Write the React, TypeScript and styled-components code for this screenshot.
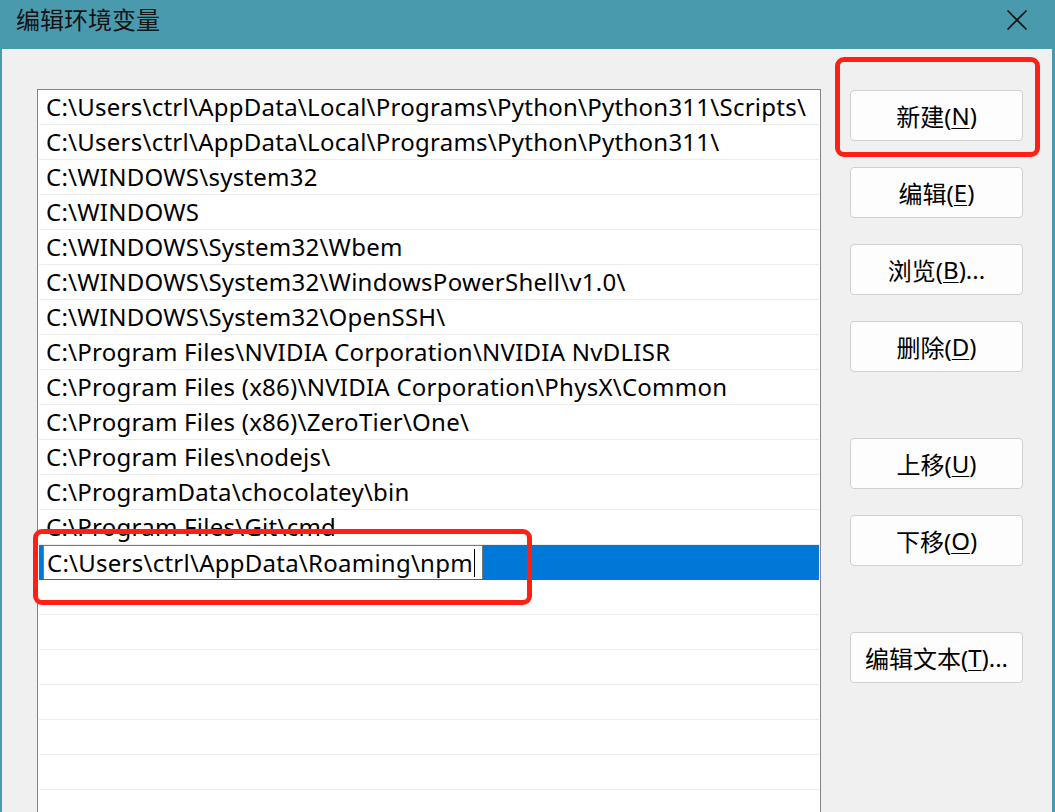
import styled, { createGlobalStyle } from 'styled-components'

const GlobalStyle = createGlobalStyle`
  html, body {
    margin: 0;
    padding: 0;
    overflow: hidden;
    background: #4a9aad;
  }
  * {
    box-sizing: border-box;
  }
`

const paths = [
  'C:\\Users\\ctrl\\AppData\\Local\\Programs\\Python\\Python311\\Scripts\\',
  'C:\\Users\\ctrl\\AppData\\Local\\Programs\\Python\\Python311\\',
  'C:\\WINDOWS\\system32',
  'C:\\WINDOWS',
  'C:\\WINDOWS\\System32\\Wbem',
  'C:\\WINDOWS\\System32\\WindowsPowerShell\\v1.0\\',
  'C:\\WINDOWS\\System32\\OpenSSH\\',
  'C:\\Program Files\\NVIDIA Corporation\\NVIDIA NvDLISR',
  'C:\\Program Files (x86)\\NVIDIA Corporation\\PhysX\\Common',
  'C:\\Program Files (x86)\\ZeroTier\\One\\',
  'C:\\Program Files\\nodejs\\',
  'C:\\ProgramData\\chocolatey\\bin',
  'C:\\Program Files\\Git\\cmd',
]

const editingValue = 'C:\\Users\\ctrl\\AppData\\Roaming\\npm'

const buttons = [
  { label: '新建', key: 'N', spaced: false },
  { label: '编辑', key: 'E', spaced: false },
  { label: '浏览', key: 'B', suffix: '...', spaced: false },
  { label: '删除', key: 'D', spaced: false },
  { label: '上移', key: 'U', spaced: true },
  { label: '下移', key: 'O', spaced: false },
  { label: '编辑文本', key: 'T', suffix: '...', spaced: true },
]

export default function App() {
  return (
    <>
      <GlobalStyle />
      <Window>
        <TitleBar>
          <Title>编辑环境变量</Title>
          <CloseButton aria-label='关闭'>
            <svg width='22' height='22' viewBox='0 0 22 22'>
              <path d='M1.5 1.5 L20.5 20.5 M20.5 1.5 L1.5 20.5' stroke='#111' strokeWidth='1.6' fill='none' />
            </svg>
          </CloseButton>
        </TitleBar>

        <Client>
          <PathList>
            {paths.map((p) => (
              <Row key={p}>{p}</Row>
            ))}
            <Row selected>
              <EditBox>
                {editingValue}
                <Caret />
              </EditBox>
            </Row>
            {Array.from({ length: 8 }).map((_, i) => (
              <Row key={`empty-${i}`} />
            ))}
          </PathList>

          <ButtonColumn>
            {buttons.map((b) => (
              <DialogButton key={b.key} spaced={b.spaced}>
                {b.label}(<u>{b.key}</u>){b.suffix}
              </DialogButton>
            ))}
          </ButtonColumn>
        </Client>

        <Highlight style={{ left: 835, top: 57, width: 205, height: 100 }} />
        <Highlight style={{ left: 33, top: 529, width: 499, height: 76 }} />
      </Window>
    </>
  )
}

const Window = styled.div`
  position: relative;
  width: 1055px;
  height: 812px;
  display: flex;
  flex-direction: column;
  background: #4a9aad;
  padding: 0 3px 0 2px;
  overflow: hidden;
  font-family: 'Noto Sans', 'Noto Sans CJK SC', sans-serif;
  color: #000;
`

const TitleBar = styled.div`
  height: 49px;
  flex-shrink: 0;
  display: flex;
  align-items: flex-start;
  justify-content: space-between;
`

const Title = styled.div`
  padding: 5px 0 0 14px;
  font-size: 24px;
  line-height: 30px;
  color: #141414;
`

const CloseButton = styled.div`
  padding: 9px 24px 0 0;
  line-height: 0;
`

const Client = styled.div`
  flex: 1;
  display: flex;
  align-items: flex-start;
  background: #f0f0f0;
  padding: 40px 0 0 35px;
`

const PathList = styled.div`
  width: 784px;
  flex-shrink: 0;
  background: #fff;
  border: 1px solid #838389;
  padding: 0 1px;
`

const Row = styled.div<{ selected?: boolean }>`
  height: 35px;
  border-bottom: 1px solid ${(p) => (p.selected ? '#0078d7' : '#ececec')};
  background: ${(p) => (p.selected ? '#0078d7' : 'transparent')};
  padding: ${(p) => (p.selected ? '0 0 0 4px' : '0 0 0 7px')};
  font-size: 24px;
  letter-spacing: 0.25px;
  line-height: 34px;
  white-space: nowrap;
  overflow: hidden;
`

const EditBox = styled.div`
  width: 440px;
  height: 35px;
  background: #fff;
  border: 1px solid #7a7a7a;
  padding-left: 3px;
  line-height: 32px;
  display: flex;
  align-items: center;
`

const Caret = styled.span`
  display: inline-block;
  width: 1px;
  height: 28px;
  background: #000;
  margin-left: 1px;
`

const ButtonColumn = styled.div`
  display: flex;
  flex-direction: column;
  margin-left: 29px;
  padding-top: 1px;
`

const DialogButton = styled.div<{ spaced?: boolean }>`
  width: 173px;
  height: 51px;
  margin-top: ${(p) => (p.spaced ? '66px' : '26px')};
  &:first-child {
    margin-top: 0;
  }
  display: flex;
  align-items: center;
  justify-content: center;
  background: #fdfdfd;
  border: 1px solid #d0d0d0;
  border-radius: 4px;
  font-size: 24px;
  color: #000;

  u {
    text-decoration-thickness: 1px;
    text-underline-offset: 3px;
  }
`

const Highlight = styled.div`
  position: absolute;
  border: 5px solid #fe2015;
  border-radius: 9px;
  pointer-events: none;
`
